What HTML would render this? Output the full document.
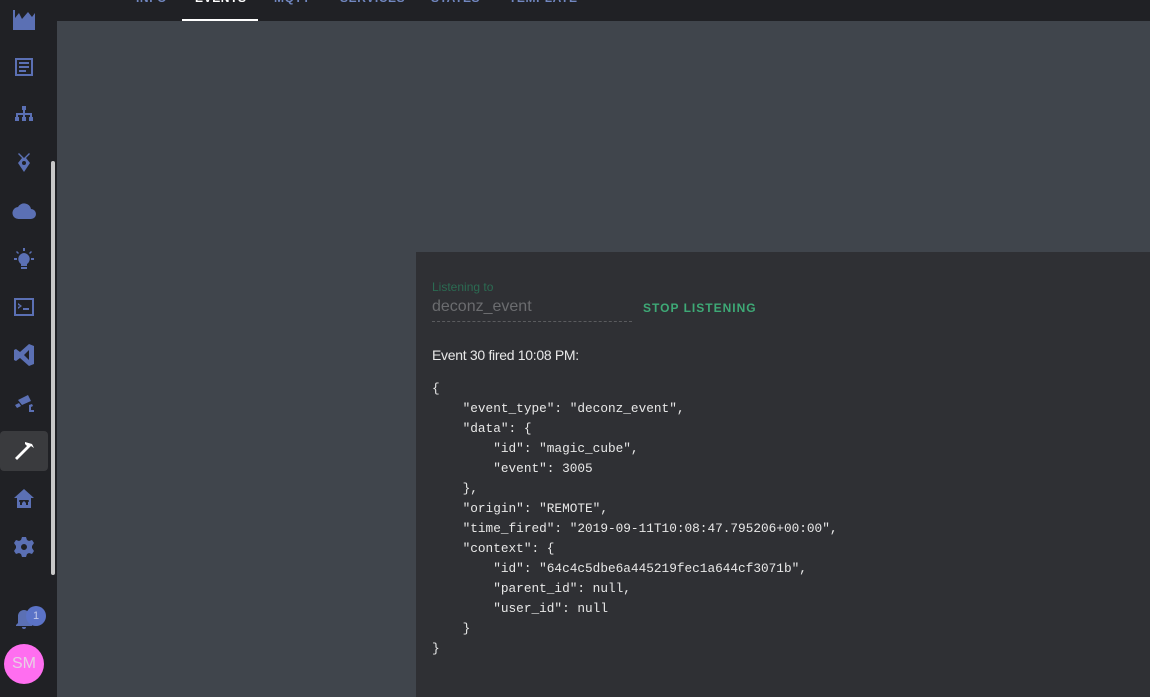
<!DOCTYPE html>
<html><head><style>
body{margin:0;width:1150px;height:697px;overflow:hidden;background:#40454c;font-family:"Liberation Sans",sans-serif;position:relative}
.side{position:absolute;left:0;top:0;width:57px;height:697px;background:#202125}
.top{position:absolute;left:57px;top:0;width:1093px;height:21px;background:#202125}
.tab{position:absolute;top:-9px;font-size:12px;font-weight:bold;color:#7187c0;letter-spacing:0.6px}
.ind{position:absolute;left:182px;top:19px;width:76px;height:2px;background:#fff}
.ic{position:absolute;left:12px;width:24px;height:24px}
.ic svg{width:24px;height:24px;fill:#5b70b4}
.scroll{position:absolute;left:51px;top:161px;width:4px;height:414px;background:#c8c8c8;border-radius:2px}
.sel{position:absolute;left:0;top:431px;width:48px;height:40px;background:#3a3b3e;border-radius:4px}
.card{position:absolute;left:416px;top:252px;width:734px;height:445px;background:#2f3034}
pre{position:absolute;left:432px;top:379px;margin:0;font-family:"Liberation Mono",monospace;font-size:12.75px;line-height:20px;color:#e8e8e8}
</style></head><body>
<div class="side"></div>
<div class="top"></div>
<div class="tab" style="left:136px">INFO</div>
<div class="tab" style="left:195px;color:#fff">EVENTS</div>
<div class="tab" style="left:274px">MQTT</div>
<div class="tab" style="left:340px">SERVICES</div>
<div class="tab" style="left:431px">STATES</div>
<div class="tab" style="left:509px">TEMPLATE</div>
<div class="ind"></div>
<div class="scroll"></div>
<div class="sel"></div>
<div class="ic" style="top:6px"><svg viewBox="0 0 24 24"><path d="M1 4h2v8l4-5 3 6 6-7 4 5 3-4v17H1z"/></svg></div>
<div class="ic" style="top:55px"><svg viewBox="0 0 24 24"><path d="M3 3h18v18H3zM5 5v14h14V5zM7 7h10v2H7zm0 4h10v2H7zm0 4h7v2H7z"/></svg></div>
<div class="ic" style="top:104px"><svg viewBox="0 0 24 24"><path d="M10 2h4v4h-1v3h7v4h1v4h-4v-4h1v-2h-5v2h1v4h-4v-4h1v-2H6v2h1v4H3v-4h1V9h7V6h-1z"/></svg></div>
<div class="ic" style="top:151px"><svg viewBox="0 0 24 24"><path d="M7 2l5 5 5-5 1 1-4 4 4 5-6 9-6-9 4-5-4-4zm5 8a2 2 0 100 4 2 2 0 000-4z"/></svg></div>
<div class="ic" style="top:199px"><svg viewBox="0 0 24 24"><path d="M19 10a7 7 0 00-13-2 6 6 0 001 12h12a5 5 0 000-10z"/></svg></div>
<div class="ic" style="top:247px"><svg viewBox="0 0 24 24"><path d="M12 6a6 6 0 00-3 11v2h6v-2a6 6 0 00-3-11zM9 20h6v2H9zM2 11h3v2H2zm17 0h3v2h-3zM5 4l2 2-1 1-2-2zm14 0l1 1-2 2-1-1zM11 1h2v3h-2z"/></svg></div>
<div class="ic" style="top:295px"><svg viewBox="0 0 24 24"><path d="M2 3h20v18H2zm2 2v14h16V5zm2 3l4 3-4 3v-2l2-1-2-1zm5 5h6v2h-6z"/></svg></div>
<div class="ic" style="top:343px"><svg viewBox="0 0 24 24"><path d="M17 1l5 2v18l-5 2-9-8-4 3-2-1V7l2-1 4 3zm0 6l-5 5 5 5z"/></svg></div>
<div class="ic" style="top:391px"><svg viewBox="0 0 24 24"><path d="M6 9l10-5 3 6-9 4zm11 5l3-1 1 2-2 1v3h3v2h-5v-5zm-14 0l4-2 2 3-4 2z"/></svg></div>
<div class="ic" style="top:439px"><svg viewBox="0 0 24 24" style="fill:#fff"><path d="M13 3l7 2 2 4-3-2-2 2-12 12-2-2L15 7l-2-2z"/></svg></div>
<div class="ic" style="top:487px"><svg viewBox="0 0 24 24"><path d="M12 2l10 9h-3v10H5V11H2zm-4 11a1 1 0 100 2v3h2v-2l2-2 2 2v2h2v-3a1 1 0 100-2z"/></svg></div>
<div class="ic" style="top:535px"><svg viewBox="0 0 24 24"><path d="M10 2h4l1 3 2 1 3-1 2 3-2 3v2l2 3-2 3-3-1-2 1-1 3h-4l-1-3-2-1-3 1-2-3 2-3v-2L2 8l2-3 3 1 2-1zm2 7a3 3 0 100 6 3 3 0 000-6z"/></svg></div>
<div class="ic" style="top:607px"><svg viewBox="0 0 24 24"><path d="M12 3a6 6 0 00-6 6v7l-2 2v1h16v-1l-2-2V9a6 6 0 00-6-6zm-2 17h4a2 2 0 01-4 0z"/></svg></div>
<div style="position:absolute;left:26px;top:606px;width:20px;height:20px;border-radius:50%;background:#5b73c7;color:#c5cbea;font-size:11px;text-align:center;line-height:20px">1</div>
<div style="position:absolute;left:4px;top:644px;width:40px;height:40px;border-radius:50%;background:#ff6ef0;color:#e8d0e5;font-size:16px;text-align:center;line-height:40px">SM</div>
<div class="card"></div>
<div style="position:absolute;left:432px;top:280px;font-size:12px;color:#2b6b52">Listening to</div>
<div style="position:absolute;left:432px;top:298px;font-size:16px;color:#6b6c6f">deconz_event</div>
<div style="position:absolute;left:432px;top:321px;width:200px;border-top:1px dashed #5a5b5e"></div>
<div style="position:absolute;left:643px;top:301px;font-size:12px;font-weight:bold;letter-spacing:1px;color:#3ea976">STOP LISTENING</div>
<div style="position:absolute;left:432px;top:347px;font-size:14px;letter-spacing:-0.3px;color:#e8e8e8">Event 30 fired 10:08 PM:</div>
<pre>{
    "event_type": "deconz_event",
    "data": {
        "id": "magic_cube",
        "event": 3005
    },
    "origin": "REMOTE",
    "time_fired": "2019-09-11T10:08:47.795206+00:00",
    "context": {
        "id": "64c4c5dbe6a445219fec1a644cf3071b",
        "parent_id": null,
        "user_id": null
    }
}</pre>
</body></html>
